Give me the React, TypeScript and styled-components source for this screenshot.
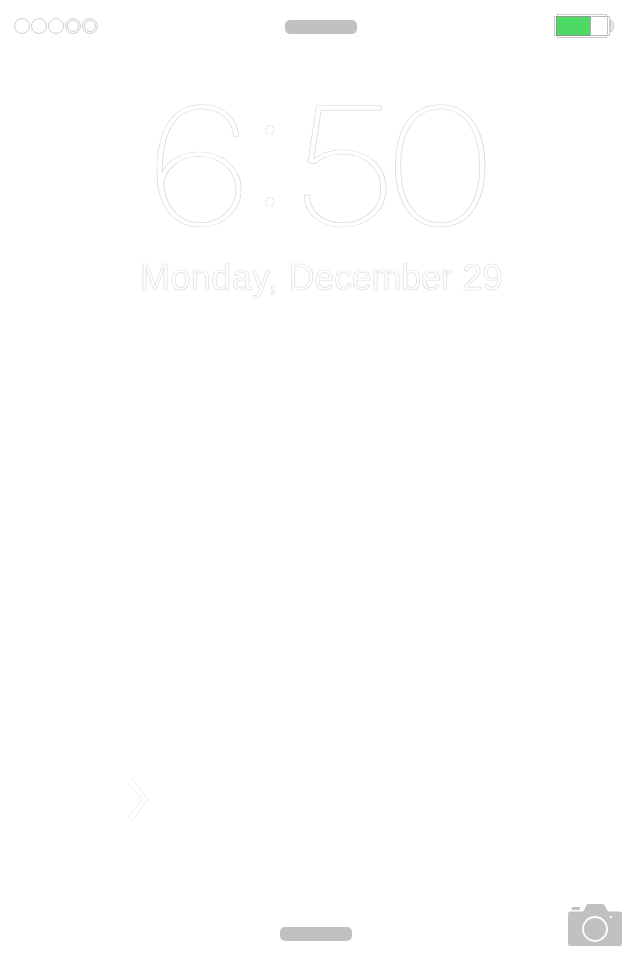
import React from "react";
import styled, { createGlobalStyle } from "styled-components";

const GlobalStyle = createGlobalStyle`
  body { margin: 0; background: #fff; }
`;

const Screen = styled.main`
  display: flex;
  flex-direction: column;
  box-sizing: border-box;
  width: 640px;
  height: 960px;
  background: #fff;
  overflow: hidden;
`;

const StatusBar = styled.header`
  display: grid;
  grid-template-columns: 285px 72px 1fr;
  align-items: start;
  height: 52px;
`;

const Signal = styled.svg`
  margin: 17px 0 0 13px;
`;

const Battery = styled.svg`
  justify-self: end;
  margin: 13px 25px 0 0;
`;

const Grabber = styled.div`
  width: 72px;
  height: 14px;
  border-radius: 5px;
  background: #c1c1c3;
`;

const TopGrabber = styled(Grabber)`
  margin-top: 20px;
`;

const BottomGrabber = styled(Grabber)`
  margin: 0 0 19px 280px;
`;

const Clock = styled.div`
  display: grid;
  grid-template-columns: 84px 58px 89px 105px;
  justify-items: center;
  align-items: center;
  height: 160px;
  margin: 34px 0 0 157px;
  font-family: Inter, sans-serif;
  font-weight: 100;
  color: #fff;
`;

const Glyph = styled.span<{ $size: number; $stretch: number; $lift?: number }>`
  display: block;
  font-size: ${(p) => p.$size}px;
  line-height: 160px;
  transform: translateY(${(p) => -(p.$lift ?? 0)}px) scaleX(${(p) => p.$stretch});
  -webkit-text-stroke: 1.2px #d6d6d6;
  paint-order: stroke fill;
`;

const DateLine = styled.div`
  height: 44px;
  margin: 10px 0 0 140px;
  font: 400 36px/44px "Liberation Sans", Arial, sans-serif;
  white-space: pre;
  color: #fff;
  -webkit-text-stroke: 0.7px #dedede;
  will-change: transform;
`;

const Word = styled.span<{ $tracking: number }>`
  letter-spacing: ${(p) => p.$tracking}px;
`;

const Unlock = styled.div`
  flex: 1;
  padding: 476px 0 0 127px;
`;

const Footer = styled.footer`
  display: flex;
  align-items: flex-end;
  justify-content: space-between;
  height: 60px;
`;

const Camera = styled.svg`
  margin: 0 18px 14px 0;
`;

export default function App() {
  return (
    <>
      <GlobalStyle />
      <Screen>
        <StatusBar>
          <Signal width="86" height="18" fill="none" stroke="#cfcfcf">
            {[9, 26, 43, 60, 77].map((x) => (
              <circle key={x} cx={x} cy="9" r="7.5" />
            ))}
            <circle cx="60" cy="9" r="5.5" />
            <circle cx="77" cy="9" r="5.5" />
          </Signal>
          <TopGrabber />
          <Battery width="62" height="26" viewBox="553 13 62 26" fill="none" shapeRendering="crispEdges">
            <path d="M557.5 16V14.5H606.5V16M557.5 36V37.5H606.5V36" stroke="#cbcbcb" />
            <path d="M556 16.5H554.5V35.5H556M607 16.5H609.5V35.5H607" stroke="#cbcbcb" />
            <rect x="557" y="17" width="33" height="18" fill="#4cd964" />
            <path d="M556.5 16.5H608M556.5 35.5H608" stroke="#b9b9b9" />
            <path d="M607.5 16V36" stroke="#c4c4c4" />
            <path d="M590.5 17V35" stroke="#aaa" />
            <path d="M590 16.5H556.5V35.5H590" stroke="#8d9990" />
            <path d="M610.5 20V32H611.5L613.5 29V23L611.5 20Z" fill="#ececec" stroke="#cbcbcb" shapeRendering="auto" />
          </Battery>
        </StatusBar>
        <Clock>
          <Glyph $size={163} $stretch={1.22} $lift={0.5}>6</Glyph>
          <Glyph $size={153} $stretch={1} $lift={16}>:</Glyph>
          <Glyph $size={163} $stretch={1.22} $lift={0.5}>5</Glyph>
          <Glyph $size={163} $stretch={1.22} $lift={0.5}>0</Glyph>
        </Clock>
        <DateLine>
          <Word $tracking={0.4}>Monday, </Word>
          <Word $tracking={-0.28}>December </Word>
          <Word $tracking={0.2}>29</Word>
        </DateLine>
        <Unlock>
          <svg width="24" height="48" viewBox="127 776 24 48" fill="none" stroke="#dcebf0" strokeWidth="0.8">
            <path d="M131.5 777.5L147.8 799.5L131.5 822.5M128 782.5L142 799.5L128 818" />
          </svg>
        </Unlock>
        <Footer>
          <BottomGrabber />
          <Camera width="54" height="42" viewBox="568 904 54 42">
            <path d="M570 911.5H582Q584 911.5 585 908L586 905.5Q586.5 904 588 904H602Q604 904 605 906L606.5 909.5Q607.5 911.5 610 911.5H620Q622 911.5 622 914V943.5Q622 946 620 946H570.5Q568 946 568 943.5V914Q568 911.5 570 911.5Z" fill="#c1c1c3" />
            <rect x="572" y="907" width="8" height="3" fill="#c1c1c3" />
            <circle cx="595" cy="929" r="12" fill="none" stroke="#fff" strokeWidth="1.8" />
            <rect x="610" y="916" width="2" height="2" fill="#fff" />
          </Camera>
        </Footer>
      </Screen>
    </>
  );
}
